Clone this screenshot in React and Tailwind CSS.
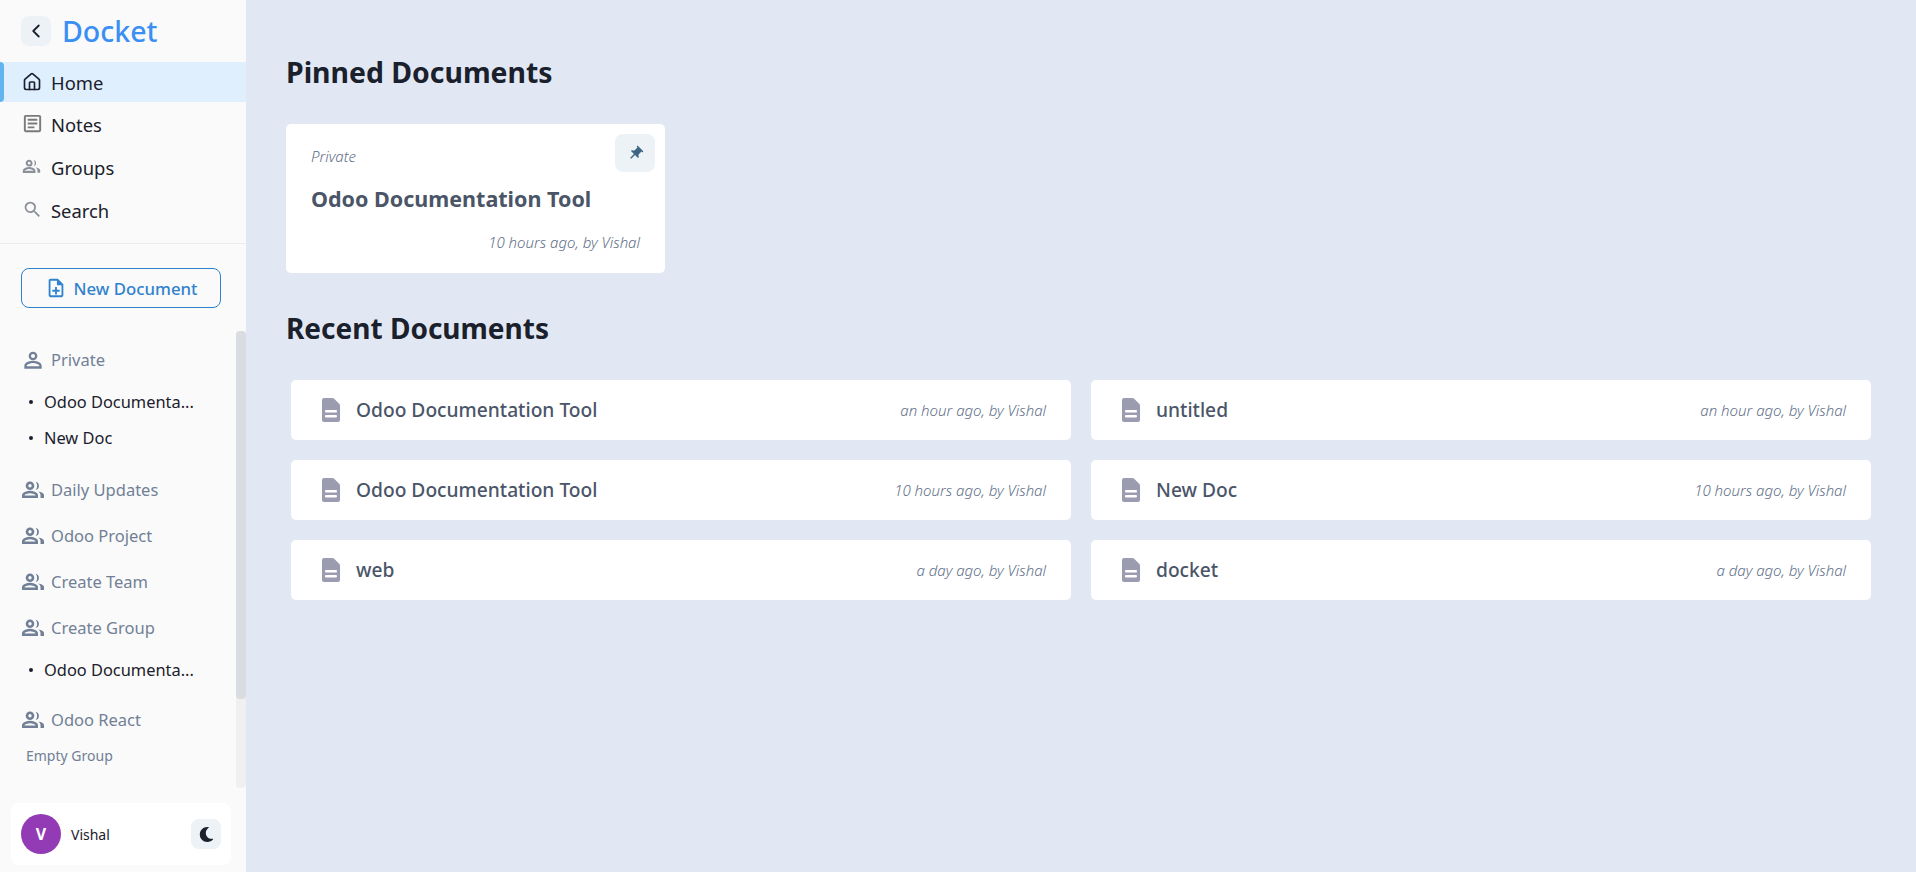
import { MdOutlineArticle, MdOutlineSearch, MdPushPin, MdOutlineNoteAdd } from 'react-icons/md';
import { LuHouse, LuChevronLeft } from 'react-icons/lu';
import { FaMoon } from 'react-icons/fa';

const PeopleIcon = ({ className }) => (
  <svg viewBox="0 0 24 24" className={className} fill="currentColor">
    <circle cx="9" cy="7.800" r="3" fill="none" stroke="currentColor" strokeWidth="2.600" />
    <path d="M2.300 18.800v-1.600c0-2 4.400-3.200 6.700-3.200s6.700 1.200 6.700 3.200v1.600z" fill="none" stroke="currentColor" strokeWidth="2.600" />
    <path d="M14.600 3.800a4.200 4.200 0 0 1 0 8.200c.9-1 1.500-2.500 1.500-4.100s-.6-3.100-1.500-4.100z" />
    <path d="M17.200 13.400c1.300.9 2.300 2.100 2.300 3.600v3H23v-3c0-2-2.900-3.200-5.800-3.600z" />
  </svg>
);

const PersonIcon = ({ className }) => (
  <svg viewBox="0 0 24 24" className={className}>
    <circle cx="12" cy="8" r="3.200" fill="none" stroke="currentColor" strokeWidth="2.300" />
    <path d="M4.500 19.500v-1.800c0-2.500 5-3.800 7.500-3.800s7.500 1.300 7.500 3.800v1.800z" fill="none" stroke="currentColor" strokeWidth="2.300" />
  </svg>
);

const GroupHead = ({ label, person }) => (
  <div className="flex items-center h-[38px] pl-[21px] text-[#718096] text-[16.5px]">
    <span className="w-[30px] flex items-center">
      {person ? <PersonIcon className="w-[24px] h-[24px]" /> : <PeopleIcon className="w-[24px] h-[24px]" />}
    </span>
    <span>{label}</span>
  </div>
);

const DocLink = ({ label }) => (
  <div className="flex items-center h-[36px] pl-[29px] text-[16.4px] text-[#1a202c]">
    <span className="w-[4px] h-[4px] rounded-full bg-[#1a202c] mr-[11px]" />
    <span>{label}</span>
  </div>
);

const NavItem = ({ icon, label, active }) => (
  <div className={active ? 'relative flex items-center h-[40px] pl-[21px] text-[18.4px] text-[#1a202c] bg-[#e0effe]' : 'flex items-center h-[43px] pl-[21px] text-[18.4px] text-[#1a202c]'}>
    {active && <span className="absolute left-0 top-0 w-[4px] h-[40px] rounded-r bg-[#63b3ed]" />}
    <span className="w-[30px] flex items-center">{icon}</span>
    <span className="pt-[2px]">{label}</span>
  </div>
);

// file shape with a clipped corner and two slits, the stock icon has three lines
const DocIcon = () => (
  <svg viewBox="0 0 18 24" className="w-[18px] h-[24px] shrink-0">
    <path d="M2 0h8.500a2 2 0 0 1 1.400.6l5.500 5.500a2 2 0 0 1 .6 1.400V22a2 2 0 0 1-2 2H2a2 2 0 0 1-2-2V2a2 2 0 0 1 2-2z" fill="#9b9cb0" />
    <rect x="3" y="12" width="12" height="2.500" rx="1" fill="#fff" />
    <rect x="3" y="17" width="12" height="2.500" rx="1" fill="#fff" />
  </svg>
);

const RecentRow = ({ title, time }) => (
  <div className="flex items-center justify-between h-[60px] bg-white rounded-[5px] pl-[31px] pr-[25px]">
    <div className="flex items-center">
      <DocIcon />
      <span className="ml-[16px] text-[19.2px] font-medium text-[#4a5568]">{title}</span>
    </div>
    <span className="text-[15px] italic font-light text-[#5f6f88]">{time}</span>
  </div>
);

const recent = [
  ['Odoo Documentation Tool', 'an hour ago, by Vishal'],
  ['untitled', 'an hour ago, by Vishal'],
  ['Odoo Documentation Tool', '10 hours ago, by Vishal'],
  ['New Doc', '10 hours ago, by Vishal'],
  ['web', 'a day ago, by Vishal'],
  ['docket', 'a day ago, by Vishal'],
];

export default function App() {
  return (
    <div className="flex h-screen overflow-hidden bg-[#e2e8f3] font-['Noto_Sans',sans-serif]">
      <aside className="w-[246px] shrink-0 h-full flex flex-col bg-[#fafafa]">
        <div className="flex items-center h-[62px] pl-[21px]">
          <button className="w-[30px] h-[30px] flex items-center justify-center rounded-lg bg-[#edf2f7] text-[#1a202c]">
            <LuChevronLeft className="w-[22px] h-[22px]" />
          </button>
          <span className="ml-[11px] text-[28.5px] font-medium text-[#3b8ff3]">Docket</span>
        </div>
        <nav className="border-b border-[#ececec] h-[182px]">
          <NavItem active label="Home" icon={<LuHouse className="w-[20px] h-[20px] ml-[1px] text-[#1a202c]" />} />
          <NavItem label="Notes" icon={<MdOutlineArticle className="w-[23px] h-[23px] text-[#7a7a7a]" />} />
          <NavItem label="Groups" icon={<PeopleIcon className="w-[19px] h-[19px] ml-[1px] text-[#8a8f98]" />} />
          <NavItem label="Search" icon={<MdOutlineSearch className="w-[21px] h-[21px] ml-[1px] text-[#8a8f98]" />} />
        </nav>
        <div className="pl-[21px] pt-[24px]">
          <button className="w-[200px] h-[40px] flex items-center justify-center border border-[#3182ce] rounded-lg text-[#3182ce] text-[16.8px] font-medium">
            <MdOutlineNoteAdd className="w-[22px] h-[22px] mr-[7px]" />
            <span className="pt-[1px]">New Document</span>
          </button>
        </div>
        <div className="relative flex-1 pt-[33px]">
          <span className="absolute right-0 top-[23px] w-[10px] h-[457px] rounded bg-[#f0f0f0]" />
          <span className="absolute right-0 top-[23px] w-[10px] h-[368px] rounded bg-[#d9dde1]" />
          <GroupHead person label="Private" />
          <div className="pt-[5px] pb-[15px]">
            <DocLink label="Odoo Documenta..." />
            <DocLink label="New Doc" />
          </div>
          <GroupHead label="Daily Updates" />
          <div className="h-[8px]" />
          <GroupHead label="Odoo Project" />
          <div className="h-[8px]" />
          <GroupHead label="Create Team" />
          <div className="h-[8px]" />
          <GroupHead label="Create Group" />
          <div className="pt-[5px] pb-[13px]">
            <DocLink label="Odoo Documenta..." />
          </div>
          <GroupHead label="Odoo React" />
          <div className="pl-[26px] pt-[6px] text-[14px] text-[#718096]">Empty Group</div>
        </div>
        <div className="ml-[11px] mr-[15px] mb-[7px] h-[62px] bg-white rounded-lg flex items-center px-[10px]">
          <div className="w-[40px] h-[40px] rounded-full bg-[#933bb5] flex items-center justify-center text-white text-[16px] font-bold">V</div>
          <span className="ml-[10px] text-[14px] text-[#1a202c] flex-1">Vishal</span>
          <button className="w-[30px] h-[30px] rounded-lg bg-[#edf2f7] flex items-center justify-center text-[#1a202c]">
            <FaMoon className="w-[15px] h-[15px]" />
          </button>
        </div>
      </aside>
      <main className="flex-1 px-[40px] pt-[50px]">
        <h2 className="text-[28.4px] leading-[44px] font-bold text-[#1a202c]">Pinned Documents</h2>
        <div className="relative mt-[30px] w-[379px] h-[149px] bg-white rounded-[5px] pt-[21px] px-[25px]">
          <div className="text-[15px] italic font-light text-[#5f6f88]">Private</div>
          <div className="mt-[15px] text-[21.5px] font-bold text-[#4a5568]">Odoo Documentation Tool</div>
          <div className="mt-[16px] text-right text-[15px] italic font-light text-[#5f6f88]">10 hours ago, by Vishal</div>
          <button className="absolute top-[10px] right-[10px] w-[40px] h-[38px] rounded-lg bg-[#edf2f7] flex items-center justify-center text-[#3f6485]">
            <MdPushPin className="w-[17px] h-[17px] rotate-45" />
          </button>
        </div>
        <h2 className="mt-[33px] text-[28px] leading-[44px] font-bold text-[#1a202c]">Recent Documents</h2>
        <div className="mt-[30px] mx-[5px] grid grid-cols-2 gap-[20px]">
          {recent.map(([title, time], i) => (
            <RecentRow key={i} title={title} time={time} />
          ))}
        </div>
      </main>
    </div>
  );
}
